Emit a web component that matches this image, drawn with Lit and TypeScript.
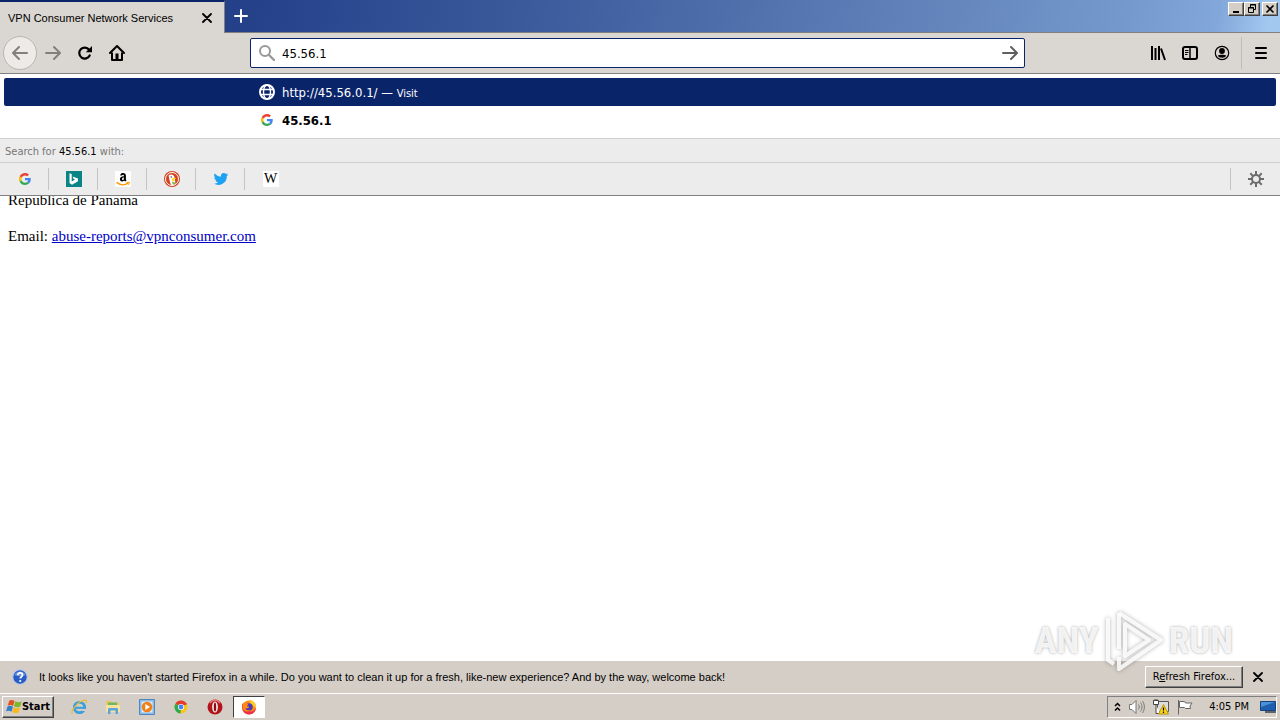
import { LitElement, html, css, svg } from "lit";
import { customElement, state } from "lit/decorators.js";

const googleIcon = html`<svg width="12" height="12" viewBox="0 0 48 48" aria-hidden="true">
  <path fill="#ea4335" d="M24 9.500c3.500 0 6.700 1.200 9.200 3.600l6.900-6.900C35.900 2.400 30.500 0 24 0 14.600 0 6.500 5.400 2.600 13.200l8 6.200C12.400 13.700 17.700 9.500 24 9.500z"/>
  <path fill="#4285f4" d="M47 24.500c0-1.600-.2-3.100-.4-4.500H24v9h12.900c-.6 3-2.200 5.500-4.700 7.200l7.700 6C44.400 38 47 31.800 47 24.500z"/>
  <path fill="#fbbc05" d="M10.500 28.600a14.500 14.500 0 0 1 0-9.200l-8-6.200a24 24 0 0 0 0 21.600z"/>
  <path fill="#34a853" d="M24 48c6.500 0 11.900-2.100 15.900-5.800l-7.700-6c-2.200 1.500-5 2.300-8.200 2.300-6.300 0-11.600-4.200-13.500-9.900l-8 6.200C6.500 42.600 14.600 48 24 48z"/></svg>`;

const bingIcon = html`<svg width="16" height="16" viewBox="0 0 16 16" aria-hidden="true"><path fill="#0a8484" d="M0 0h16v16H0z"/><path fill="#fff" d="M3.500 2.200l2.200.9v7.300L9 8.600l-1.500-.8-.9-2.200 5.400 1.900v2.700L6 13.700l-2.500-1.600z"/></svg>`;
const amazonIcon = html`<svg width="16" height="16" viewBox="0 0 16 16" aria-hidden="true"><path fill="#fff" d="M0 0h16v16H0z"/><path d="M5.200 4.400C5.500 2.500 6.700 2 8.100 2c1.700 0 2.800.9 2.800 2.700v3.100c0 .8.300 1 .7 1.600L10.100 10.600l-1-1.200C7.700 11.200 4.900 10.600 4.900 8.200c0-2 1.500-2.900 4-3 0-1-.2-1.500-.9-1.500-.6 0-.9.300-1 .9z"/><path fill="#fff" d="M8.900 6.500c-1.300 0-1.900.6-1.900 1.500 0 1.600 1.900 1.300 1.900-.6z"/><path d="M1.600 11.400c3.600 3 8.300 3 11.500.8" fill="none" stroke="#f90" stroke-width="1.400"/><path d="M11.700 11.500l2.700-.2-.8 2.500" fill="none" stroke="#f90"/></svg>`;
const duckIcon = html`<svg width="16" height="16" viewBox="0 0 16 16" aria-hidden="true"><circle cx="8" cy="8" r="8" fill="#d4401d"/><circle cx="8" cy="8" r="6.500" fill="#d4401d" stroke="#fff"/><path fill="#fff" d="M4.600 4.600c1.800-2.200 5.600-1 6 1.800l.4 2.600.4 4.100c-1.300.9-3.600 1-4.700.5L5.500 9z"/><path fill="#fed30a" d="M8.400 7.400c2-.7 3.500-.4 3.600.2s-2.800.8-2.700 1.200 1.700.4 1.500.9c-.6.700-2.900.1-3.200-.7z"/><circle cx="7.200" cy="6" r=".8" fill="#2d4f8e"/><path fill="#67bd47" d="M8.200 10.400l3 1.300-.2 1.700-2.800-1z"/></svg>`;
const twitterIcon = html`<svg width="16" height="16" viewBox="0 0 24 24" aria-hidden="true"><path fill="#1da1f2" d="M23 5.200a9 9 0 0 1-2.600.7 4.500 4.500 0 0 0 2-2.500 9 9 0 0 1-2.900 1.100 4.500 4.500 0 0 0-7.700 4.100A12.800 12.800 0 0 1 2.500 3.900a4.500 4.500 0 0 0 1.400 6 4.500 4.500 0 0 1-2-.6c0 2.200 1.500 4.100 3.600 4.500a4.500 4.500 0 0 1-2 .1 4.500 4.500 0 0 0 4.200 3.100A9 9 0 0 1 1 18.900a12.800 12.800 0 0 0 19.700-11.400A9 9 0 0 0 23 5.200z"/></svg>`;
const wikiIcon = html`<span class="wiki">W</span>`;

const engines = [
  { name: "Google", icon: googleIcon },
  { name: "Bing", icon: bingIcon },
  { name: "Amazon.com", icon: amazonIcon },
  { name: "DuckDuckGo", icon: duckIcon },
  { name: "Twitter", icon: twitterIcon },
  { name: "Wikipedia (en)", icon: wikiIcon },
];

const stroke = (paths: unknown) => html`<svg width="16" height="16" viewBox="0 0 16 16" fill="none" stroke="currentColor" stroke-width="2" stroke-linecap="round" stroke-linejoin="round" aria-hidden="true">${paths}</svg>`;

const icons = {
  close: html`<svg width="10" height="10" viewBox="0 0 10 10" stroke="currentColor" stroke-width="1.800" stroke-linecap="round" aria-hidden="true"><path d="M1 1l8 8M9 1L1 9"/></svg>`,
  plus: html`<svg width="14" height="14" viewBox="0 0 14 14" stroke="#fff" stroke-width="2" stroke-linecap="round" aria-hidden="true"><path d="M7 1v12M1 7h12"/></svg>`,
  back: stroke(svg`<path d="M15 8H1.500M7 2L1 8l6 6"/>`),
  forward: stroke(svg`<path d="M1 8h13.500M9 2l6 6-6 6"/>`),
  reload: html`<svg width="16" height="16" viewBox="0 0 16 16" aria-hidden="true"><path d="M12.700 10.500a5.500 5.500 0 1 1-.6-5.800" fill="none" stroke="currentColor" stroke-width="2.200" stroke-linecap="round"/><path d="M15 1v6.200H8.800z" fill="currentColor"/></svg>`,
  home: html`<svg width="16" height="16" viewBox="0 0 16 16" aria-hidden="true"><path d="M1 8l7-7 7 7" fill="none" stroke="currentColor" stroke-width="2" stroke-linecap="round" stroke-linejoin="round"/><path d="M3 7.500V15h10V7.500" fill="none" stroke="currentColor" stroke-width="2" stroke-linejoin="round"/><path d="M6.500 8.500h3V15h-3z" fill="currentColor"/></svg>`,
  search: html`<svg width="16" height="16" viewBox="0 0 16 16" fill="none" stroke="#999" stroke-width="2" stroke-linecap="round" aria-hidden="true"><circle cx="6" cy="6" r="5"/><path d="M10 10l5 5" stroke-width="2.400"/></svg>`,
  globe: html`<svg width="16" height="16" viewBox="0 0 16 16" fill="none" stroke="#fff" aria-hidden="true"><circle cx="8" cy="8" r="7" stroke-width="2"/><ellipse cx="8" cy="8" rx="3.500" ry="7" stroke-width="1.400"/><path d="M1.500 5.500h13M1.500 10.500h13" stroke-width="1.400"/></svg>`,
  library: html`<svg width="16" height="16" viewBox="0 0 16 16" stroke="currentColor" stroke-width="2" aria-hidden="true"><path d="M2 1v14M5.500 3v12M9 1v14M11 3.500l4 11.500"/></svg>`,
  sidebar: html`<svg width="16" height="16" viewBox="0 0 16 16" fill="none" stroke="currentColor" aria-hidden="true"><rect x="1" y="2" width="14" height="12" rx="2" stroke-width="2"/><path d="M8 2v12" stroke-width="1.500"/><path d="M3 5.500h3.500M3 7.500h3.500M3 9.500h2.500"/></svg>`,
  account: html`<svg width="16" height="16" viewBox="0 0 16 16" aria-hidden="true"><circle cx="8" cy="8" r="6.700" fill="none" stroke="currentColor" stroke-width="1.200"/><circle cx="8" cy="6" r="2.900" fill="currentColor"/><path d="M3.800 10.600c1.500-1 6.900-1 8.400 0-1 3-7.400 3-8.400 0z" fill="currentColor"/></svg>`,
  menu: html`<svg width="12" height="12" viewBox="0 0 12 12" stroke="currentColor" stroke-width="2" stroke-linecap="round" aria-hidden="true"><path d="M1 1h10M1 6h10M1 11h10"/></svg>`,
  gear: html`<svg width="16" height="16" viewBox="0 0 16 16" fill="none" stroke="#6c6c6c" aria-hidden="true"><circle cx="8" cy="8" r="4" stroke-width="2"/><path d="M8 0v4M8 12v4M0 8h4M12 8h4M2.300 2.300l2.800 2.800M10.900 10.900l2.800 2.800M13.700 2.300l-2.800 2.800M5.100 10.900l-2.800 2.800" stroke-width="2"/></svg>`,
  help: html`<svg width="16" height="16" viewBox="0 0 16 16" aria-hidden="true"><circle cx="8" cy="8" r="7.300" fill="#2a5cc4" stroke="#b9c8e6" stroke-width="1.200"/><path d="M2.500 6a6 6 0 0 1 11 0c-3 1.500-8 1.500-11 0z" fill="#6d95e3"/><path d="M5.700 6.200c0-3.200 4.800-3 4.800-.2 0 1.700-2.300 1.800-2.300 3.600" fill="none" stroke="#fff" stroke-width="1.700"/><circle cx="8.200" cy="12" r="1.100" fill="#fff"/></svg>`,
  windows: html`<svg width="16" height="16" viewBox="0 0 16 16" aria-hidden="true"><path fill="#e2521d" d="M3.200 1.700C5 .5 6.800.7 8.500 2L7.100 7C5.300 5.800 3.500 5.700 1.700 6.700z"/><path fill="#7db72f" d="M9.400 2.300c1.800 1.100 3.700 1.300 6.300.1l-1.400 5.200c-2.200 1.100-4.200 1-6.300-.3z"/><path fill="#2f7fd0" d="M1.500 7.600c1.800-1.100 3.600-.9 5.400.2l-1.400 5c-1.800-1.200-3.600-1.300-5.500-.2z"/><path fill="#fbb81c" d="M7.700 8.200c2.100 1.200 4.200 1.300 6.300.3l-1.400 5c-2.200 1-4.300.8-6.300-.4z"/></svg>`,
};

const launchers = [
  { name: "Internet Explorer", icon: svg`<circle cx="8.500" cy="8.500" r="5.200" fill="none" stroke="#3aa0dd" stroke-width="2.800"/><path d="M4 8.800h9.500" stroke="#3aa0dd" stroke-width="2"/><path d="M11 10h5v2h-5z" fill="#d5cec6"/><path d="M1.500 15C-1 12 7 2 14.500 1.200c1.500 0 1.300 1.800.5 3" fill="none" stroke="#e8bb3c" stroke-width="1.200"/>` },
  { name: "Windows Explorer", icon: svg`<path d="M1 2h5l1 1.500h7V13H1z" fill="#e7c665"/><path d="M3 3.500h9V7H3z" fill="#6fb85e"/><path d="M1 6h14v7H1z" fill="#f6e3a0"/><path d="M3 15V10.500c0-1 .6-1.500 1.500-1.500h7c1 0 1.500.5 1.500 1.500V15h-2.500v-3.500h-5V15z" fill="#5ba5dc"/>` },
  { name: "Windows Media Player", icon: svg`<path d="M.5.500h15v15H.5z" fill="#8bbbe6" stroke="#4f86bf"/><path d="M2.500 2.500h11v11h-11z" fill="#d9eafa"/><circle cx="8" cy="8" r="5.300" fill="#f0801a"/><path d="M6.300 4.900v6.200L11 8z" fill="#fff"/>` },
  { name: "Google Chrome", icon: svg`<circle cx="8" cy="8" r="6.500" fill="#fbc516"/><path d="M8 8L2.400 4.700A6.500 6.500 0 0 1 13.700 5z" fill="#e33b2e"/><path d="M8 8l-.5 6.500A6.500 6.500 0 0 1 2.400 4.700z" fill="#2da94f"/><path d="M8 5h5.700" stroke="#e33b2e" stroke-width="1"/><circle cx="8" cy="8" r="3.100" fill="#fff"/><circle cx="8" cy="8" r="2.400" fill="#4285f4"/>` },
  { name: "Opera", icon: svg`<circle cx="8" cy="8" r="7.500" fill="#b3141c"/><path d="M3 4a6 6 0 0 1 10 0" stroke="#e77a7a" stroke-width="1.500" fill="none"/><ellipse cx="8" cy="8" rx="2.900" ry="5.500" fill="#f2eeec"/><ellipse cx="8" cy="8" rx="1.200" ry="4.500" fill="#8b0d14"/>` },
];

const firefoxIcon = svg`<circle cx="8" cy="8.500" r="7" fill="#ff8a16"/><path d="M9 .5c3.500 1 6.500 4 6 8.500l-4-3C8.500 4 8 2 9 .5z" fill="#ffcb2e"/><path d="M1.300 4.500C.5 9 1.500 15 8 15.500c4 0 7-3 7-7-1.500 4-5 4.500-7 3.500z" fill="#ee2f4c"/><circle cx="8" cy="8" r="3.700" fill="#4b3bb5"/><path d="M2 3.500l2.500 1.300h3L6 7.200l2.300.6c-.6 2-3.300 1.800-4.300 1.500 1 2 3.800 2.600 5.500 1.500-2 3.200-8 2-8-3.500z" fill="#ff8a16"/>`;

@customElement("app-root")
export class AppRoot extends LitElement {
  @state() private query = "45.56.1";

  static styles = css`
    :host {
      --face: #d5cec6;
      --bar: #dad6d1;
      --navy: #0a246a;
      display: flex;
      flex-direction: column;
      height: 100vh;
      overflow: hidden;
      position: relative;
      background: #fff;
      color: #000;
      font: 11px/14px "DejaVu Sans Condensed", "DejaVu Sans", sans-serif;
    }
    * { box-sizing: border-box; }
    svg { display: block; flex: none; }
    button { font: inherit; color: inherit; margin: 0; padding: 0; border: 0; background: none; display: flex; align-items: center; justify-content: center; flex: none; }

    .titlebar { display: flex; height: 33px; flex: none; border-bottom: 1px solid #808080; background: linear-gradient(100deg, #1d3a80 0%, #24418a 20%, #3f5f9f 45%, #5f80b8 70%, #7599cd 88%, #82a7da 95%, #a3c8f0 99%); }
    .tab { display: flex; align-items: center; justify-content: space-between; width: 225px; height: 33px; padding: 0 11px 0 8px; background: var(--bar); border-top: 2px solid var(--navy); border-right: 1px solid #808080; }
    .tab span, .notice p { font-family: "Liberation Sans", Arial, sans-serif; }
    .tab button { width: 12px; height: 16px; }
    .new-tab { width: 32px; height: 32px; }
    .window-buttons { display: flex; margin-left: auto; padding: 2px 2px 0 0; }
    .bevel { background: var(--face); border: 1px solid; border-color: #fff #404040 #404040 #fff; box-shadow: inset -1px -1px #808080; }
    .window-buttons button { width: 16px; height: 14px; }
    .window-buttons button:last-child { margin-left: 2px; }

    .toolbar { display: grid; grid-template-columns: 250px minmax(0, 775px) 1fr; align-items: center; height: 41px; flex: none; background: var(--bar); border-bottom: 1px solid #808080; }
    .nav { display: flex; align-items: center; padding-left: 3px; }
    .nav button { width: 32px; height: 32px; }
    .nav .back { width: 34px; height: 34px; border: 1px solid #b9b6b1; border-radius: 50%; background: #edeae7; }
    .dim { color: #82807c; }
    .urlbar { display: flex; align-items: center; gap: 7px; height: 30px; padding: 0 6px 0 8px; border: 1px solid var(--navy); border-radius: 2px; background: #fff; color: #606060; }
    .urlbar input { flex: 1; min-width: 0; height: 22px; border: 0; padding: 1px 0 0; outline: 0; background: none; color: #000; font: 13px/20px "DejaVu Sans Condensed", "DejaVu Sans", sans-serif; }
    .tools { display: flex; justify-content: flex-end; align-items: center; }
    .tools button { width: 32px; height: 32px; }
    .tools .menu { width: 39px; border-left: 1px solid #c0bcb7; margin-left: 3px; }

    .page { flex: 1; min-height: 0; position: relative; overflow: hidden; padding: 117px 8px 0; font: 15px/18px "Liberation Serif", serif; }
    .page p { margin: 0 0 18px; }
    .page a { color: #0000c8; }

    .popup { position: absolute; inset: 0 0 auto; background: #fff; border-bottom: 1px solid #808080; font: 11px/14px "DejaVu Sans Condensed", "DejaVu Sans", sans-serif; }
    .results { list-style: none; margin: 0; padding: 4px; }
    .results li { display: flex; align-items: center; height: 28px; padding: 0 0 0 255px; border-radius: 2px; font-size: 13px; line-height: 16px; }
    .results li > :last-child { padding-top: 2px; }
    .results .glyph { display: flex; justify-content: center; width: 16px; margin-right: 7px; }
    .results .selected { background: var(--navy); color: #fff; }
    .results small { font-size: 11px; }
    .with { height: 25px; padding: 6px 5px 0; border-top: 1px solid #cfcfcf; border-bottom: 1px solid #cfcfcf; background: #ececec; color: #777; }
    .with span { color: #000; }
    .engines { display: flex; align-items: center; height: 32px; background: #ececec; }
    .engines button { width: 49px; height: 22px; padding-left: 2px; border-right: 1px solid #c4c4c4; }
    .engines button:nth-child(6) { border-right: 0; }
    .engines .settings { margin-left: auto; width: 50px; padding-left: 0; border-left: 1px solid #c4c4c4; border-right: 0; }
    .wiki { display: block; width: 16px; height: 16px; background: #fff; font: 14px/16px "Liberation Serif", serif; text-align: center; }

    .notice { display: flex; align-items: center; height: 32px; flex: none; padding: 0 16px 0 12px; background: var(--face); }
    .notice p { margin: 0 0 0 11px; flex: 1; }
    .notice .refresh { height: 22px; width: 98px; margin-right: 9px; }
    .notice .dismiss { width: 12px; height: 16px; }

    .taskbar { display: flex; align-items: center; height: 27px; flex: none; padding: 0 3px 0 2px; border-top: 1px solid #fff; background: var(--face); }
    .start { width: 52px; height: 22px; font-weight: bold; }
    .launch { display: flex; margin-left: 8px; }
    .launch button { width: 34px; height: 22px; }
    .launch .active { width: 32px; margin-left: 1px; background: #fff; border: 1px solid; border-color: #404040 #fff #fff #404040; }
    .tray { display: flex; align-items: center; gap: 8px; margin-left: auto; height: 22px; padding: 0 0 0 6px; border: 1px solid; border-color: #808080 #fff #fff #808080; }
    .tray time { padding: 0 3px 0 8px; }

    .watermark { position: absolute; right: 47px; bottom: 47px; display: flex; align-items: center; gap: 6px; pointer-events: none; color: rgb(255 255 255 / 85%); font: bold 37px/64px "Liberation Sans Narrow", "Roboto Condensed", sans-serif; text-shadow: 0 0 3px rgb(0 0 0 / 35%); }
    .watermark svg { filter: drop-shadow(0 0 2px rgb(0 0 0 / 35%)); }
  `;

  render() {
    return html`
      <header class="titlebar">
        <div class="tab"><span>VPN Consumer Network Services</span><button aria-label="Close tab">${icons.close}</button></div>
        <button class="new-tab" aria-label="New tab">${icons.plus}</button>
        <div class="window-buttons">
          <button class="bevel" aria-label="Minimize"><svg width="12" height="10" viewBox="0 0 12 10"><path d="M3 8h6" stroke="#000" stroke-width="2"/></svg></button>
          <button class="bevel" aria-label="Restore"><svg width="12" height="10" viewBox="0 0 12 10" fill="none" stroke="#000"><path d="M4.500 3V.5h5v5H8M4 1h6M2.500 3.500h5v5h-5zM2 4h6"/></svg></button>
          <button class="bevel" aria-label="Close"><svg width="12" height="10" viewBox="0 0 12 10"><path d="M2.500 1.500l7 7M9.500 1.500l-7 7" stroke="#000" stroke-width="1.600"/></svg></button>
        </div>
      </header>

      <nav class="toolbar">
        <div class="nav">
          <button class="back dim" aria-label="Back">${icons.back}</button>
          <button class="dim" aria-label="Forward">${icons.forward}</button>
          <button aria-label="Reload">${icons.reload}</button>
          <button aria-label="Home">${icons.home}</button>
        </div>
        <div class="urlbar">
          ${icons.search}
          <input aria-label="Search or enter address" .value=${this.query} @input=${(e: Event) => (this.query = (e.target as HTMLInputElement).value)} />
          <button aria-label="Go">${icons.forward}</button>
        </div>
        <div class="tools">
          <button aria-label="Library">${icons.library}</button>
          <button aria-label="Sidebars">${icons.sidebar}</button>
          <button aria-label="Account">${icons.account}</button>
          <button class="menu" aria-label="Menu">${icons.menu}</button>
        </div>
      </nav>

      <main class="page">
        <p>Republica de Panama</p>
        <p>Email: <a href="mailto:abuse-reports@vpnconsumer.com">abuse-reports@vpnconsumer.com</a></p>
        <section class="popup" aria-label="Suggestions">
          <ul class="results">
            <li class="selected"><span class="glyph">${icons.globe}</span><span>http://45.56.0.1/ — <small>Visit</small></span></li>
            <li><span class="glyph">${googleIcon}</span><b>${this.query}</b></li>
          </ul>
          <div class="with">Search for <span>${this.query}</span> with:</div>
          <div class="engines">
            ${engines.map((e) => html`<button aria-label=${e.name}>${e.icon}</button>`)}
            <button class="settings" aria-label="Search settings">${icons.gear}</button>
          </div>
        </section>
      </main>

      <section class="notice">
        ${icons.help}
        <p>It looks like you haven't started Firefox in a while. Do you want to clean it up for a fresh, like-new experience? And by the way, welcome back!</p>
        <button class="refresh bevel"><span>R<u>e</u>fresh Firefox...</span></button>
        <button class="dismiss" aria-label="Close message">${icons.close}</button>
      </section>

      <footer class="taskbar">
        <button class="start bevel">${icons.windows}<span>Start</span></button>
        <div class="launch">
          ${launchers.map((l) => html`<button aria-label=${l.name}><svg width="16" height="16" viewBox="0 0 16 16">${l.icon}</svg></button>`)}
          <button class="active" aria-label="Firefox"><svg width="16" height="16" viewBox="0 0 16 16">${firefoxIcon}</svg></button>
        </div>
        <div class="tray">
          <svg width="7" height="10" viewBox="0 0 7 10" fill="none" stroke="#000" stroke-width="1.500"><path d="M1 4l2.500-2.500L6 4M1 8.500L3.500 6 6 8.500"/></svg>
          <svg width="16" height="16" viewBox="0 0 16 16" fill="#fff" stroke="#777"><path d="M.5 5.500H3l4-4v13l-4-4H.5z"/><path d="M9.500 5.500c1 1.500 1 3.500 0 5M11.500 3.500c2 2.500 2 6.500 0 9M13.500 2c2.500 3.500 2.500 8.500 0 12" fill="none"/></svg>
          <svg width="16" height="16" viewBox="0 0 16 16"><path d="M4.500 2.500h11v10h-11z" fill="#ddd" stroke="#555"/><path d="M.5 1.500h5v4h-5zM3 5.500v9h4M2 0v2M4 0v2" fill="#fff" stroke="#444"/><path d="M10.500 5.500l5 9.500h-10z" fill="#fbd51c" stroke="#b8940a"/><path d="M10.500 8.500v3M10.500 12.500v1.500" stroke="#000" stroke-width="1.200"/></svg>
          <svg width="16" height="16" viewBox="0 0 16 16" fill="#fff" stroke="#666"><path d="M2.500 2.500h5l1 1.500h6.500l-2 3 .5 2.500H8.500l-1-1h-5z"/><path d="M1.500 1v14.500"/></svg>
          <time>4:05 PM</time>
          <svg width="16" height="16" viewBox="0 0 16 16"><path d="M.5 2.500h15v9H.5z" fill="#1d5fae" stroke="#16427b"/><path d="M1 3h14L1 8z" fill="#4b90da"/><path d="M5 13h11" stroke="#5c646e" stroke-width="2"/></svg>
        </div>
      </footer>

      <div class="watermark"><span>ANY</span>
        <svg width="58" height="64" viewBox="0 0 58 64" fill="none" stroke="rgb(255 255 255 / 85%)" stroke-width="4" stroke-linejoin="round"><path d="M14 4l42 27-42 29V48"/><path d="M14 4v36M3 9v42l6 4M20 15l24 16-24 16z"/></svg>
        <span>RUN</span></div>
    `;
  }
}
